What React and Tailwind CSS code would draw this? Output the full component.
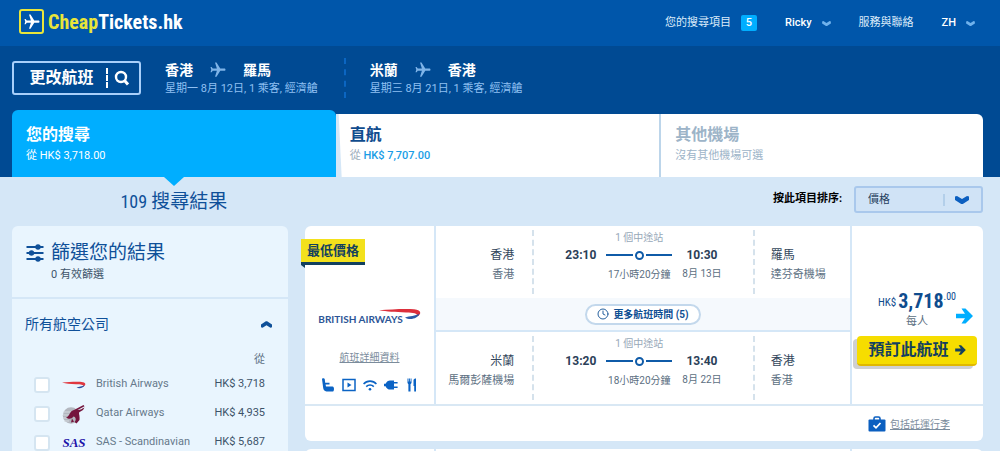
import { useState } from 'react';
import { Clock } from 'lucide-react';
import { MdFlight } from 'react-icons/md';

const airlines = [
  { id: 'ba', name: 'British Airways', price: 'HK$ 3,718', Logo: BritishRibbon },
  { id: 'qr', name: 'Qatar Airways', price: 'HK$ 4,935', Logo: QatarLogo },
  { id: 'sk', name: 'SAS - Scandinavian', price: 'HK$ 5,687', Logo: SasLogo },
];

const trips = [
  { from: '香港', to: '羅馬', details: '星期一 8月 12日, 1 乘客, 經濟艙' },
  { from: '米蘭', to: '香港', details: '星期三 8月 21日, 1 乘客, 經濟艙' },
];

const segments = [
  { from: '香港', fromAirport: '香港', departs: '23:10', arrives: '10:30', duration: '17小時20分鐘', date: '8月 13日', to: '羅馬', toAirport: '達芬奇機場' },
  { from: '米蘭', fromAirport: '馬爾彭薩機場', departs: '13:20', arrives: '13:40', duration: '18小時20分鐘', date: '8月 22日', to: '香港', toAirport: '香港' },
];

/* Icons */
function Chevron({ className }) {
  return (
    <svg viewBox="0 0 14 8" className={className} fill="currentColor" aria-hidden="true">
      <path d="M0 0.6 L2 0 L7 3 L12 0 L14 0.6 V4 L7.8 8 H6.2 L0 4 Z" />
    </svg>
  );
}

function BoldArrow({ className }) {
  return (
    <svg viewBox="0 0 17 16" className={className} fill="currentColor" aria-hidden="true">
      <path d="M0 5.7 H9 L5.5 0.5 H9.5 L17 8 L9.5 15.5 H5.5 L9 10.3 H0 Z" />
    </svg>
  );
}

function SearchIcon() {
  return (
    <svg viewBox="0 0 16 16" className="size-4" fill="none" stroke="currentColor" strokeWidth="2.4" aria-hidden="true">
      <circle cx="7" cy="7" r="5" />
      <path d="M10.5 10.5 L14 14.5" strokeWidth="3" />
    </svg>
  );
}

function SlidersIcon() {
  return (
    <svg viewBox="0 0 18 18" className="w-[18px] h-[18px]" fill="currentColor" aria-hidden="true">
      <path d="M0.5 2 h17 v2 h-17z M0.5 8 h17 v2 h-17z M0.5 14 h17 v2 h-17z" />
      <circle cx="12" cy="3" r="2.7" />
      <circle cx="5.5" cy="9" r="2.7" />
      <circle cx="12" cy="15" r="2.7" />
    </svg>
  );
}

function BritishRibbon() {
  return (
    <svg viewBox="0 0 24 8" className="w-6 h-2" aria-hidden="true">
      <path d="M0 1.6 C8 0.8 17 0.6 21 1.2 C24 1.8 24 4 21.5 5.4 C21.5 3.6 19 3.4 14 3.3 C8 3.1 4 2.6 0 1.6Z" fill="#e0373f" />
      <path d="M14.5 6.6 C17 5.6 20 5.6 22.5 4.2 C22 6.4 18 8 14.5 6.6Z" fill="#2d4f9e" />
    </svg>
  );
}

function QatarLogo() {
  return (
    <svg viewBox="0 0 24 20" className="w-6 h-5" aria-hidden="true">
      <circle cx="9" cy="11.5" r="8.2" fill="#b3b7bf" />
      <path d="M1.5 8 h9 M1 11 h8 M1 14 h6 M2 17 h5" stroke="#d4dae0" strokeWidth="1" />
      <path d="M4 13.5 C8 12.5 7 7 12.5 5.8 L21.5 1 L22.5 2.2 L15.5 6 C19 6 20 4.5 22.5 3.4 L21 6 C18.5 7.8 17 7.6 17 9 C17 11 18 13 17.5 16 L14.5 19.5 L12.5 18 C14.5 16.5 14 13 11.5 12.6 C9.5 15 7 15.8 4 13.5Z" fill="#74153d" />
      <path d="M10 14.5 L12 17.8 L9 18.5Z" fill="#74153d" />
    </svg>
  );
}

function SasLogo() {
  return <span className="font-['Liberation_Serif',serif] text-[13px] leading-4 font-bold italic text-[#1c12a8]">SAS</span>;
}

function BritishAirwaysLogo() {
  return (
    <div className="flex items-end justify-center">
      <span className="font-['Lato',sans-serif] text-[10px] leading-[14px] font-bold text-[#2c5596] whitespace-nowrap">BRITISH AIRWAYS</span>
      <svg viewBox="0 0 42 12" className="-ml-6 mb-1.5 w-[42px] h-3 shrink-0" aria-hidden="true">
        <path d="M0 2.3 C12 1.2 26 0.4 35 1.2 C42 2 43 5 38.5 8.6 C39 5.4 35 4.6 27 4.4 C16 4.1 8 3.6 0 2.3Z" fill="#dc2f3b" />
        <path d="M26 9.6 C31 8 36 8.4 40.5 5.6 C39 10.6 31 12.8 26 9.6Z" fill="#2c5aa6" />
      </svg>
    </div>
  );
}

function Amenities() {
  return (
    <div className="flex items-center gap-[7px] text-[#0b63c4]">
      <svg viewBox="0 0 14 14" className="size-3.5" fill="currentColor" role="img" aria-label="座位">
        <path d="M1 1 C1 0 3.4 0 3.7 1 L4.2 4.8 H8.5 V6.6 H4.6 L5 8.4 H11.6 C13.4 8.4 13.4 13 12 13.4 H5.5 C3.4 13.4 2.4 11.6 2.2 10 Z" />
      </svg>
      <svg viewBox="0 0 14 14" className="size-3.5" fill="none" stroke="currentColor" strokeWidth="1.5" role="img" aria-label="娛樂">
        <rect x="1" y="1.5" width="12" height="11" />
        <path d="M5.5 4.5 L9.5 7 L5.5 9.5Z" fill="currentColor" stroke="none" />
      </svg>
      <svg viewBox="0 0 14 14" className="size-3.5" fill="none" stroke="currentColor" strokeWidth="1.6" role="img" aria-label="Wi-Fi">
        <path d="M0.6 6 C4 2.2 10 2.2 13.4 6 M3.2 8.6 C5.4 6.4 8.6 6.4 10.8 8.6" />
        <circle cx="7" cy="11.2" r="1.3" fill="currentColor" stroke="none" />
      </svg>
      <svg viewBox="0 0 14 14" className="size-3.5" fill="currentColor" role="img" aria-label="電源">
        <path d="M0 5.8 H1.6 C2.4 3.6 4.4 2.4 6 2.4 H10 V4 H13.6 V5.6 H10 V8.4 H13.6 V10 H10 V11.6 H6 C4.4 11.6 2.4 10.4 1.6 8.2 H0Z" />
      </svg>
      <svg viewBox="0 0 14 14" className="size-3.5" fill="currentColor" role="img" aria-label="餐飲">
        <path d="M2.5 0.5 h1 v3 h0.6 v-3 h1 v3 h0.6 v-3 h0.8 v4.5 l-1 1.2 V13.5 H3.4 V6.2 L2.5 5Z M8.5 2 C8.5 1 10 0.4 11 0.5 V13.5 H9.2 V8 H8.5Z" />
      </svg>
    </div>
  );
}

function Logo() {
  return (
    <a href="#" className="flex items-center gap-1 pl-[7px] pb-[3px]">
      <span className="flex size-[25px] items-center justify-center rounded-[3px] border-2 border-[#e9e53a] text-white">
        <MdFlight className="rotate-90" size={18} />
      </span>
      <span className="font-['Roboto_Condensed','Roboto',sans-serif] text-[20px] leading-6 font-bold text-white">
        <span className="text-[#e9e53a]">Cheap</span>Tickets.hk
      </span>
    </a>
  );
}

function Header() {
  return (
    <header className="flex h-[46px] items-center justify-between bg-[#0056aa] pl-3 pr-[25px] text-[11px] text-[#dcecfa]">
      <Logo />
      <nav className="flex items-center">
        <a href="#" className="flex items-center gap-2.5">
          您的搜尋項目
          <span className="flex size-4 items-center justify-center rounded-xs bg-[#00aeff] font-medium text-white">5</span>
        </a>
        <button className="ml-7 flex items-center gap-2.5 font-medium text-white">
          Ricky
          <Chevron className="w-[9px] h-[5px] text-[#70b2ec]" />
        </button>
        <a href="#" className="ml-7">服務與聯絡</a>
        <button className="ml-7 flex items-center gap-2.5 font-medium text-white">
          ZH
          <Chevron className="w-[9px] h-[5px] text-[#70b2ec]" />
        </button>
      </nav>
    </header>
  );
}

function SearchSummary() {
  return (
    <div className="flex items-center pt-3">
      <button className="flex h-[34px] w-[129px] items-center justify-center rounded-[3px] border-2 border-[#a8cffa] pl-1.5 text-[16px] font-bold text-white">
        更改航班
        <span className="ml-3 mr-1.5 h-5 border-l-2 border-dashed border-white" />
        <SearchIcon />
      </button>
      {trips.map((trip, i) => (
        <div
          key={trip.details}
          className={i === 0 ? 'ml-6 pt-0.5 pr-[26px]' : 'border-l-2 border-dashed border-[#0b66c2] pt-0.5 pl-6'}
        >
          <div className="flex h-5 items-center text-[14px] font-bold text-white">
            {trip.from}
            <MdFlight className="mx-4 rotate-90 text-[#7fb4e8]" size={18} />
            {trip.to}
          </div>
          <div className="text-[11px] leading-[18px] text-[#8fc0f2]">{trip.details}</div>
        </div>
      ))}
    </div>
  );
}

function Tabs() {
  return (
    <div className="grid grid-cols-3 items-end text-[11px] leading-5">
      <button className="relative h-[67px] rounded-t-md bg-[#00aeff] px-3.5 pt-0.5 text-left text-white">
        <span className="block text-[16px] leading-[22px] font-bold">您的搜尋</span>
        從 HK$ 3,718.00
        <span className="absolute top-full left-1/2 -ml-2.5 size-0 border-x-[10px] border-t-9 border-x-transparent border-t-[#00aeff]" />
      </button>
      <div className="bg-[#d5e7f7]">
        <button className="h-[63px] w-full bg-white px-3.5 pb-0.5 text-left text-[#9aabba] [clip-path:polygon(3px_0,100%_0,100%_100%,6px_100%)]">
          <span className="block text-[16px] leading-[22px] font-bold text-[#0f4c8e]">直航</span>
          從 <span className="font-medium text-[#1a9de6]">HK$ 7,707.00</span>
        </button>
      </div>
      <button disabled className="h-[63px] rounded-tr-md border-l-2 border-[#bcd5ea] bg-white px-3.5 pb-0.5 text-left text-[#9db4c8]">
        <span className="block text-[16px] leading-[22px] font-bold">其他機場</span>
        沒有其他機場可選
      </button>
    </div>
  );
}

function ResultsBar() {
  const [sort, setSort] = useState('price');

  return (
    <div className="flex h-[49px] items-center justify-between">
      <h1 className="flex w-1/3 items-baseline justify-center gap-1 pt-0.5 text-[19px] text-[#0f5099]">
        <span className="font-['Roboto_Condensed','Roboto',sans-serif] text-[18px]">109</span>
        搜尋結果
      </h1>
      <div className="flex items-center gap-3 pb-1">
        <label htmlFor="sort" className="text-[11px] font-bold text-black">按此項目排序:</label>
        <div className="relative w-[129px]">
          <select
            id="sort"
            value={sort}
            onChange={e => setSort(e.target.value)}
            className="h-[27px] w-full appearance-none rounded-[3px] border-2 border-[#a9c8ec] bg-[#d0e3f6] pl-3 text-[11px] text-[#26415e]"
          >
            <option value="price">價格</option>
          </select>
          <span className="pointer-events-none absolute top-2 right-[38px] h-3 border-l-2 border-dashed border-[#b3cfea]" />
          <Chevron className="pointer-events-none absolute top-[10px] right-3.5 w-[14px] h-2 text-[#0b5fc0]" />
        </div>
      </div>
    </div>
  );
}

function Sidebar() {
  const [selected, setSelected] = useState([]);

  const toggle = (id) => {
    setSelected(prev => prev.includes(id) ? prev.filter(x => x !== id) : [...prev, id]);
  };

  return (
    <aside className="w-[276px] shrink-0 rounded-t-md bg-[#e9f5fe]">
      <div className="flex gap-[7px] border-b-2 border-[#d5e7f7] pt-3.5 pl-3.5 h-[73px]">
        <div className="pt-1 text-[#0f5099]"><SlidersIcon /></div>
        <div>
          <h2 className="text-[19px] leading-[26px] text-[#0f5099]">篩選您的結果</h2>
          <p className="text-[11px] leading-[18px] text-[#41566b]">{selected.length} 有效篩選</p>
        </div>
      </div>

      <button className="flex h-[50px] w-full items-center justify-between pl-[13px] pr-4 text-[14px] text-[#0f5099]">
        所有航空公司
        <Chevron className="w-[11px] h-[7px] rotate-180" />
      </button>
      <div className="h-[21px] pr-[23px] text-right text-[11px] leading-[21px] text-[#5d7083]">從</div>

      <ul>
        {airlines.map(({ id, name, price, Logo }) => (
          <li key={id}>
            <label className="flex h-[29px] items-center pl-[22px] pr-[23px] text-[11px] text-[#66798b]">
              <input
                type="checkbox"
                checked={selected.includes(id)}
                onChange={() => toggle(id)}
                className="size-4 appearance-none rounded-[3px] border-2 border-[#d5e5f1] bg-white checked:bg-[#0b63c4]"
              />
              <span className="ml-3 flex w-6 justify-center"><Logo /></span>
              <span className="ml-2.5 flex-1">{name}</span>
              <span className="text-[#3d5369]">{price}</span>
            </label>
          </li>
        ))}
      </ul>
    </aside>
  );
}

function Segment({ segment }) {
  return (
    <div className="grid h-[72px] grid-cols-[97fr_224fr_96fr] py-1 text-[11px] text-[#5c6f82]">
      <div className="pt-4 pr-[18px] text-right">
        <div className="text-[12px] leading-[18px] text-[#33475c]">{segment.from}</div>
        <div className="leading-[22px]">{segment.fromAirport}</div>
      </div>

      <div className="flex justify-center gap-2.5 border-x-2 border-dashed border-[#d5e2ec]">
        <div className="pt-4 text-[12px] leading-[18px] font-bold text-[#2b4058]">{segment.departs}</div>
        <div className="flex w-[66px] flex-col items-center text-[10px] whitespace-nowrap">
          <div className="leading-4 text-[#97a8b8]">1 個中途站</div>
          <div className="flex h-[18px] w-full items-center gap-0.5">
            <span className="h-0.5 flex-1 bg-[#0f5ba8]" />
            <span className="size-[9px] rounded-full border-2 border-[#0f5ba8]" />
            <span className="h-0.5 flex-1 bg-[#0f5ba8]" />
          </div>
          <div className="leading-[22px]">{segment.duration}</div>
        </div>
        <div className="flex flex-col items-center pt-4">
          <div className="text-[12px] leading-[18px] font-bold text-[#2b4058]">{segment.arrives}</div>
          <div className="text-[10px] leading-5 whitespace-nowrap">{segment.date}</div>
        </div>
      </div>

      <div className="pt-4 pl-4">
        <div className="text-[12px] leading-[18px] text-[#33475c]">{segment.to}</div>
        <div className="leading-[22px]">{segment.toAirport}</div>
      </div>
    </div>
  );
}

function FlightCard() {
  return (
    <article className="rounded-md bg-white">
      <div className="flex border-b-2 border-[#d9e8f4]">
        {/* Airline */}
        <div className="relative flex w-[129px] flex-col items-center">
          <div className="absolute top-[13px] -left-1 border-b-3 border-[#12405f] bg-[#f3e11c] px-1.5 text-[13px] leading-[23px] font-bold text-[#12405f] whitespace-nowrap">
            最低價格
            <span className="absolute top-[26px] left-0 size-0 border-t-3 border-l-4 border-t-[#12405f] border-l-transparent" />
          </div>
          <div className="pt-[82px]">
            <BritishAirwaysLogo />
          </div>
          <a href="#" className="mt-6 text-[10px] leading-4 text-[#7b8c9c] underline">航班詳細資料</a>
          <div className="mt-3">
            <Amenities />
          </div>
        </div>

        {/* Segments */}
        <div className="min-w-0 flex-1 border-x-2 border-[#d5e7f7]">
          <Segment segment={segments[0]} />
          <div className="flex h-[34px] items-center justify-center border-b-2 border-[#d5e7f7] bg-[#f5f9fd]">
            <button className="flex h-[21px] items-center gap-1 rounded-full border-2 border-[#c3d8ec] bg-white px-2.5 text-[10px] font-bold text-[#0f4f93]">
              <Clock size={12} strokeWidth={1.8} />
              更多航班時間 (5)
            </button>
          </div>
          <Segment segment={segments[1]} />
        </div>

        {/* Price */}
        <div className="relative w-[131px] pt-[63px] pr-[6px] pl-[5px]">
          <div className="flex justify-center font-['Roboto_Condensed','Roboto',sans-serif] text-[#0f4c8e]">
            <span className="self-end text-[11px] leading-5">HK$</span>
            <span className="ml-0.5 text-[20px] leading-6 font-bold">3,718</span>
            <span className="text-[10px] leading-4">.00</span>
          </div>
          <div className="text-center text-[11px] leading-[18px] text-[#5c6f82]">每人</div>
          <BoldArrow className="absolute top-[82px] right-2.5 w-[17px] h-4 text-[#00aeff]" />
          <button className="mt-[5px] flex h-[30px] w-full items-center justify-center gap-1.5 rounded-sm border-b-2 border-[#e0b800] bg-[#f6dd00] text-[16px] font-bold text-[#12405f] shadow-[-4px_3px_0_#cfd0d2]">
            預訂此航班
            <BoldArrow className="w-[11px] h-2.5" />
          </button>
        </div>
      </div>

      {/* Baggage */}
      <div className="flex h-[35px] items-center justify-end gap-1 pr-[33px]">
        <svg viewBox="0 0 18 16" className="w-[18px] h-4" aria-hidden="true">
          <path d="M6 4 V2.5 Q6 1 7.5 1 h3 Q12 1 12 2.5 V4" fill="none" stroke="#0b5fc0" strokeWidth="1.6" />
          <rect x="0.5" y="3.5" width="17" height="12" rx="1" fill="#0b5fc0" />
          <path d="M5.5 9.3 L8 11.8 L12.5 7" fill="none" stroke="#fff" strokeWidth="1.8" />
        </svg>
        <a href="#" className="pt-0.5 text-[10px] text-[#7b8c9c] underline">包括託運行李</a>
      </div>
    </article>
  );
}

export default function App() {
  return (
    <div className="h-screen overflow-hidden bg-[#d5e7f7] font-['Roboto','Noto_Sans_CJK_TC',sans-serif]">
      <Header />
      <div className="bg-[#004a93] pl-3 pr-[17px]">
        <div className="flex h-16 flex-col">
          <SearchSummary />
        </div>
        <Tabs />
      </div>

      <main className="pl-3 pr-[17px]">
        <ResultsBar />
        <div className="flex gap-[17px]">
          <Sidebar />
          <section className="flex min-w-0 flex-1 flex-col gap-2">
            <FlightCard />
            <article className="flex h-52 rounded-md bg-white">
              <div className="w-[129px]" />
              <div className="flex-1 border-x-2 border-[#d5e7f7]" />
              <div className="w-[131px]" />
            </article>
          </section>
        </div>
      </main>
    </div>
  );
}
